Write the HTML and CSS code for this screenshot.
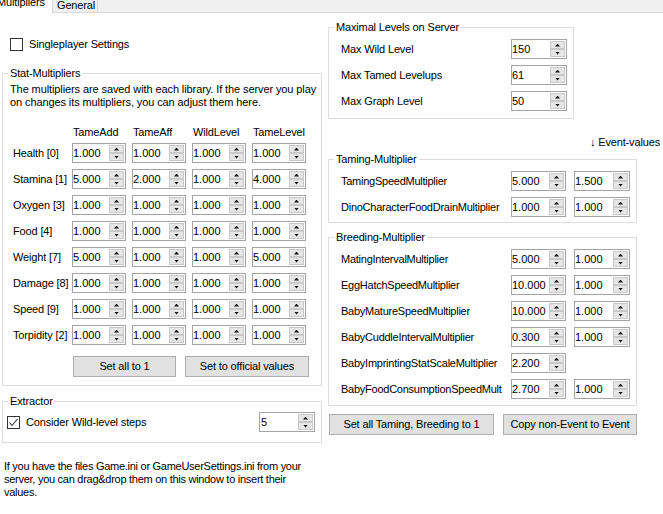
FILE: index.html
```html
<!DOCTYPE html>
<html>
<head>
<meta charset="utf-8">
<link rel="stylesheet" href="styles.css">
</head>
<body>
<div class="tabs">
  <div class="tab tab-active"><span>Multipliers</span></div>
  <div class="tab tab-general"><span>General</span></div>
</div>
<div class="page">
  <div class="col-left">
    <div class="check top-check"><span class="box"></span>Singleplayer Settings</div>

    <div class="group stat">
      <div class="gtitle">Stat-Multipliers</div>
      <p class="desc">The multipliers are saved with each library. If the server you play<br>on changes its multipliers, you can adjust them here.</p>
      <div class="sgrid shead">
        <span></span><span>TameAdd</span><span>TameAff</span><span>WildLevel</span><span>TameLevel</span>
      </div>
      <div class="sgrid srows">
        <span>Health [0]</span>
        <div class="num"><span class="v">1.000</span><span class="spin"><b class="up"></b><b class="dn"></b></span></div>
        <div class="num"><span class="v">1.000</span><span class="spin"><b class="up"></b><b class="dn"></b></span></div>
        <div class="num"><span class="v">1.000</span><span class="spin"><b class="up"></b><b class="dn"></b></span></div>
        <div class="num"><span class="v">1.000</span><span class="spin"><b class="up"></b><b class="dn"></b></span></div>

        <span>Stamina [1]</span>
        <div class="num"><span class="v">5.000</span><span class="spin"><b class="up"></b><b class="dn"></b></span></div>
        <div class="num"><span class="v">2.000</span><span class="spin"><b class="up"></b><b class="dn"></b></span></div>
        <div class="num"><span class="v">1.000</span><span class="spin"><b class="up"></b><b class="dn"></b></span></div>
        <div class="num"><span class="v">4.000</span><span class="spin"><b class="up"></b><b class="dn"></b></span></div>

        <span>Oxygen [3]</span>
        <div class="num"><span class="v">1.000</span><span class="spin"><b class="up"></b><b class="dn"></b></span></div>
        <div class="num"><span class="v">1.000</span><span class="spin"><b class="up"></b><b class="dn"></b></span></div>
        <div class="num"><span class="v">1.000</span><span class="spin"><b class="up"></b><b class="dn"></b></span></div>
        <div class="num"><span class="v">1.000</span><span class="spin"><b class="up"></b><b class="dn"></b></span></div>

        <span>Food [4]</span>
        <div class="num"><span class="v">1.000</span><span class="spin"><b class="up"></b><b class="dn"></b></span></div>
        <div class="num"><span class="v">1.000</span><span class="spin"><b class="up"></b><b class="dn"></b></span></div>
        <div class="num"><span class="v">1.000</span><span class="spin"><b class="up"></b><b class="dn"></b></span></div>
        <div class="num"><span class="v">1.000</span><span class="spin"><b class="up"></b><b class="dn"></b></span></div>

        <span>Weight [7]</span>
        <div class="num"><span class="v">5.000</span><span class="spin"><b class="up"></b><b class="dn"></b></span></div>
        <div class="num"><span class="v">1.000</span><span class="spin"><b class="up"></b><b class="dn"></b></span></div>
        <div class="num"><span class="v">1.000</span><span class="spin"><b class="up"></b><b class="dn"></b></span></div>
        <div class="num"><span class="v">5.000</span><span class="spin"><b class="up"></b><b class="dn"></b></span></div>

        <span>Damage [8]</span>
        <div class="num"><span class="v">1.000</span><span class="spin"><b class="up"></b><b class="dn"></b></span></div>
        <div class="num"><span class="v">1.000</span><span class="spin"><b class="up"></b><b class="dn"></b></span></div>
        <div class="num"><span class="v">1.000</span><span class="spin"><b class="up"></b><b class="dn"></b></span></div>
        <div class="num"><span class="v">1.000</span><span class="spin"><b class="up"></b><b class="dn"></b></span></div>

        <span>Speed [9]</span>
        <div class="num"><span class="v">1.000</span><span class="spin"><b class="up"></b><b class="dn"></b></span></div>
        <div class="num"><span class="v">1.000</span><span class="spin"><b class="up"></b><b class="dn"></b></span></div>
        <div class="num"><span class="v">1.000</span><span class="spin"><b class="up"></b><b class="dn"></b></span></div>
        <div class="num"><span class="v">1.000</span><span class="spin"><b class="up"></b><b class="dn"></b></span></div>

        <span>Torpidity [2]</span>
        <div class="num"><span class="v">1.000</span><span class="spin"><b class="up"></b><b class="dn"></b></span></div>
        <div class="num"><span class="v">1.000</span><span class="spin"><b class="up"></b><b class="dn"></b></span></div>
        <div class="num"><span class="v">1.000</span><span class="spin"><b class="up"></b><b class="dn"></b></span></div>
        <div class="num"><span class="v">1.000</span><span class="spin"><b class="up"></b><b class="dn"></b></span></div>
      </div>
      <div class="sbtns">
        <button class="btn btn-one">Set all to 1</button>
        <button class="btn btn-official">Set to official values</button>
      </div>
    </div>

    <div class="group extractor">
      <div class="gtitle">Extractor</div>
      <div class="ext-row">
        <div class="check"><span class="box checked"><svg width="11" height="11" viewBox="0 0 11 11"><polyline points="1.5,5.5 4,8.5 9.5,2" fill="none" stroke="#333" stroke-width="1.1"/></svg></span>Consider Wild-level steps</div>
        <div class="num num-ext"><span class="v">5</span><span class="spin"><b class="up"></b><b class="dn"></b></span></div>
      </div>
    </div>

    <p class="hint">If you have the files Game.ini or GameUserSettings.ini from your<br>server, you can drag&amp;drop them on this window to insert their<br>values.</p>
  </div>

  <div class="col-right">
    <div class="group maxlv">
      <div class="gtitle">Maximal Levels on Server</div>
      <div class="mgrid">
        <span>Max Wild Level</span>
        <div class="num"><span class="v">150</span><span class="spin"><b class="up"></b><b class="dn"></b></span></div>
        <span>Max Tamed Levelups</span>
        <div class="num"><span class="v">61</span><span class="spin"><b class="up"></b><b class="dn"></b></span></div>
        <span>Max Graph Level</span>
        <div class="num"><span class="v">50</span><span class="spin"><b class="up"></b><b class="dn"></b></span></div>
      </div>
    </div>

    <div class="event">&#8595; Event-values</div>

    <div class="group taming">
      <div class="gtitle">Taming-Multiplier</div>
      <div class="rgrid">
        <span>TamingSpeedMultiplier</span>
        <div class="num"><span class="v">5.000</span><span class="spin"><b class="up"></b><b class="dn"></b></span></div>
        <div class="num"><span class="v">1.500</span><span class="spin"><b class="up"></b><b class="dn"></b></span></div>
        <span>DinoCharacterFoodDrainMultiplier</span>
        <div class="num"><span class="v">1.000</span><span class="spin"><b class="up"></b><b class="dn"></b></span></div>
        <div class="num"><span class="v">1.000</span><span class="spin"><b class="up"></b><b class="dn"></b></span></div>
      </div>
    </div>

    <div class="group breeding">
      <div class="gtitle">Breeding-Multiplier</div>
      <div class="rgrid">
        <span>MatingIntervalMultiplier</span>
        <div class="num"><span class="v">5.000</span><span class="spin"><b class="up"></b><b class="dn"></b></span></div>
        <div class="num"><span class="v">1.000</span><span class="spin"><b class="up"></b><b class="dn"></b></span></div>
        <span>EggHatchSpeedMultiplier</span>
        <div class="num"><span class="v">10.000</span><span class="spin"><b class="up"></b><b class="dn"></b></span></div>
        <div class="num"><span class="v">1.000</span><span class="spin"><b class="up"></b><b class="dn"></b></span></div>
        <span>BabyMatureSpeedMultiplier</span>
        <div class="num"><span class="v">10.000</span><span class="spin"><b class="up"></b><b class="dn"></b></span></div>
        <div class="num"><span class="v">1.000</span><span class="spin"><b class="up"></b><b class="dn"></b></span></div>
        <span>BabyCuddleIntervalMultiplier</span>
        <div class="num"><span class="v">0.300</span><span class="spin"><b class="up"></b><b class="dn"></b></span></div>
        <div class="num"><span class="v">1.000</span><span class="spin"><b class="up"></b><b class="dn"></b></span></div>
        <span>BabyImprintingStatScaleMultiplier</span>
        <div class="num"><span class="v">2.200</span><span class="spin"><b class="up"></b><b class="dn"></b></span></div>
        <span></span>
        <span>BabyFoodConsumptionSpeedMult</span>
        <div class="num"><span class="v">2.700</span><span class="spin"><b class="up"></b><b class="dn"></b></span></div>
        <div class="num"><span class="v">1.000</span><span class="spin"><b class="up"></b><b class="dn"></b></span></div>
      </div>
    </div>

    <div class="rbtns">
      <button class="btn btn-reset">Set all Taming, Breeding to 1</button>
      <button class="btn btn-copy">Copy non-Event to Event</button>
    </div>
  </div>
</div>
</body>
</html>
```

FILE: styles.css
```css
* { box-sizing: border-box; }
html, body { margin: 0; padding: 0; }
body {
  width: 663px;
  height: 514px;
  overflow: hidden;
  background: #fff;
  font-family: "Liberation Sans", Arial, sans-serif;
  font-size: 11px;
  line-height: 13px;
  letter-spacing: -0.15px;
  color: #000;
}
p { margin: 0; }

/* tabs */
.tabs {
  display: flex;
  height: 13px;
  background: #f0f0f0;
  border-bottom: 1px solid #d9d9d9;
}
.tab { height: 13px; overflow: hidden; white-space: nowrap; }
.tab-active { width: 53px; background: #fff; border-right: 1px solid #d9d9d9; }
.tab-active span { display: block; margin: -4px 0 0 -3px; }
.tab-general { width: 45px; height: 12px; padding-left: 4px; border-right: 1px solid #d9d9d9; background: #f0f0f0; }
.tab-general span { display: block; margin-top: -1px; }

.page { display: flex; }
.col-left { width: 322px; flex: none; }
.col-right { width: 335px; margin-left: 6px; flex: none; }

/* checkbox */
.check { display: flex; align-items: center; white-space: nowrap; }
.box {
  width: 13px; height: 13px;
  border: 1px solid #333;
  background: #fff;
  margin-right: 6px;
  flex: none;
  display: flex; align-items: center; justify-content: center;
}
.box svg { display: block; }
.top-check { margin: 25px 0 0 10px; height: 13px; }

/* group boxes */
.group { border: 1px solid #dcdcdc; }
.gtitle {
  width: fit-content;
  margin: -7px 0 0 5px;
  padding: 0 2px;
  background: #fff;
  line-height: 13px;
  white-space: nowrap;
}

/* numeric up-down */
.num {
  display: flex;
  height: 20px;
  border: 1px solid #a3a3a3;
  background: #fff;
  letter-spacing: 0;
}
.num .v { flex: 1; line-height: 18px; white-space: nowrap; overflow: hidden; }
.spin { width: 15px; margin: 1px 1px 1px 0; display: flex; flex-direction: column; flex: none; }
.spin b {
  flex: 1;
  background: #e6e6e6;
  border: 1px solid #c9c9c9;
  display: flex; align-items: center; justify-content: center;
}
.spin b::after { content: ""; width: 5px; height: 3px; background: #111; }
.spin .up::after { clip-path: polygon(50% 0, 100% 100%, 0 100%); }
.spin .dn::after { clip-path: polygon(0 0, 100% 0, 50% 100%); }

/* buttons */
.btn {
  height: 21px;
  border: 1px solid #adadad;
  background: #e1e1e1;
  font: inherit;
  letter-spacing: inherit;
  color: #000;
  padding: 0;
  text-align: center;
  line-height: 19px;
  white-space: nowrap;
}

/* stat multipliers */
.stat { margin: 22px 0 0 2px; width: 320px; padding-bottom: 8px; }
.desc { margin: 3px 0 0 7px; white-space: nowrap; letter-spacing: -0.1px; }
.sgrid {
  display: grid;
  grid-template-columns: 53px repeat(4, 54px);
  column-gap: 6px;
  margin-left: 10px;
}
.shead { margin-top: 17px; }
.shead span { padding-left: 1px; }
.srows { margin-top: 4px; row-gap: 6px; align-items: center; white-space: nowrap; }
.sbtns { display: flex; gap: 9px; margin: 11px 0 0 70px; }
.btn-one { width: 103px; }
.btn-official { width: 124px; }

/* extractor */
.extractor { margin: 15px 0 0 2px; width: 320px; padding-bottom: 10px; }
.ext-row { display: flex; align-items: center; margin: 4px 6px 0 4px; }
.num-ext { margin-left: auto; width: 56px; }
.num-ext .v { padding-left: 1px; }

.hint { margin: 17px 0 0 4px; white-space: nowrap; letter-spacing: -0.27px; }

/* right column */
.maxlv { margin-top: 14px; width: 246px; padding-bottom: 7px; }
.mgrid {
  display: grid;
  grid-template-columns: 170px 56px;
  row-gap: 6px;
  margin: 5px 6px 0 12px;
  align-items: center;
}
.event { margin-top: 17px; text-align: right; padding-right: 3px; }
.taming { margin-top: 10px; width: 309px; padding-bottom: 5px; }
.breeding { margin-top: 14px; width: 309px; padding-bottom: 6px; }
.rgrid {
  display: grid;
  grid-template-columns: 162px 55px 56px;
  column-gap: 8px;
  row-gap: 6px;
  margin: 5px 6px 0 12px;
  align-items: center;
  white-space: nowrap;
}
.rgrid > span { letter-spacing: -0.25px; }
.rbtns { display: flex; gap: 9px; margin: 8px 0 0 1px; }
.btn-reset { width: 165px; }
.btn-copy { width: 134px; }
```
